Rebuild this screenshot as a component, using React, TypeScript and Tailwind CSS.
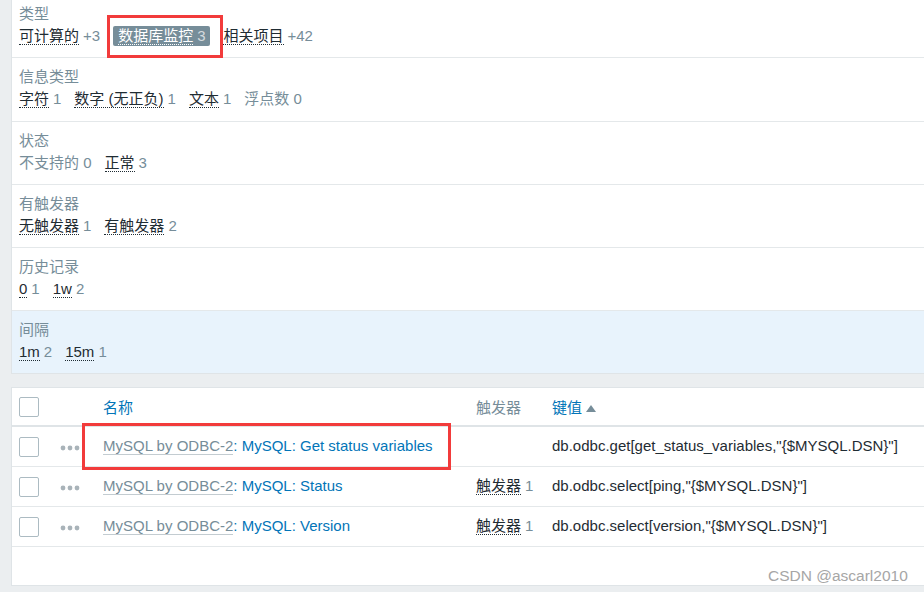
import React from "react";

const FONT = { fontFamily: '"Liberation Sans", Arial, "Noto Sans CJK SC", sans-serif' };

type Item = { name: string; count: string; kind?: "normal" | "selected" | "disabled" };

function Value({ item }: { item: Item }) {
  if (item.kind === "selected") {
    return (
      <span className="inline-flex h-[20px] items-center rounded-[2px] bg-[#768d99] px-[5px] text-white">
        <span className="border-b border-dotted border-white leading-[16px]">{item.name}</span>
        <span className="ml-[4px] text-[#d4dade]">{item.count}</span>
      </span>
    );
  }
  if (item.kind === "disabled") {
    return (
      <span className="text-[#768d99]">
        {item.name} {item.count}
      </span>
    );
  }
  return (
    <span className="whitespace-nowrap">
      <span className="border-b border-dotted border-[#1f2c33] text-[#1f2c33] leading-[16px]">{item.name}</span>
      <span className="ml-[4px] text-[#768d99]">{item.count}</span>
    </span>
  );
}

function Section({
  label,
  items,
  className,
}: {
  label: string;
  items: Item[];
  className: string;
}) {
  return (
    <div className={"flex flex-col px-[7px] " + className}>
      <div className="leading-[18px] text-[#768d99]">{label}</div>
      <div className="mt-[4px] flex h-[18px] items-center gap-x-[13px] leading-[18px]">
        {items.map((it, i) => (
          <Value key={i} item={it} />
        ))}
      </div>
    </div>
  );
}

function Checkbox() {
  return <div className="h-[20px] w-[20px] rounded-[2px] border border-[#acbbc2] bg-white" />;
}

function Dots() {
  return (
    <svg width="20" height="6" viewBox="0 0 20 6">
      <circle cx="3" cy="3" r="2.4" fill="#a9b3b9" />
      <circle cx="10" cy="3" r="2.4" fill="#a9b3b9" />
      <circle cx="17" cy="3" r="2.4" fill="#a9b3b9" />
    </svg>
  );
}

function Row({ name, trigger, keyText }: { name: string; trigger: boolean; keyText: string }) {
  return (
    <div className="flex h-[40px] items-center border-b border-[#e4e8ea] pl-[7px]">
      <div className="w-[41px]">
        <Checkbox />
      </div>
      <div className="flex w-[43px] items-center pt-[2px]">
        <Dots />
      </div>
      <div className="w-[373px] whitespace-nowrap">
        <span className="border-b border-[#c3ccd1] leading-[16px] text-[#768d99]">MySQL by ODBC-2</span>
        <span className="text-[#0275b8]">: {name}</span>
      </div>
      <div className="w-[76px] whitespace-nowrap">
        {trigger && (
          <>
            <span className="border-b border-dotted border-[#1f2c33] leading-[16px] text-[#1f2c33]">触发器</span>
            <span className="ml-[4px] text-[#768d99]">1</span>
          </>
        )}
      </div>
      <div className="flex-1 whitespace-nowrap text-[#1f2c33]">{keyText}</div>
    </div>
  );
}

export default function App() {
  return (
    <div
      className="relative h-[592px] w-[924px] overflow-hidden bg-[#ebeef0] text-[15px]"
      style={FONT}
    >
      <div className="ml-[11px] flex flex-col border-b border-l border-[#dfe4e7] bg-white">
        <Section
          className="h-[58px] border-b border-[#e4e8ea] pt-[5px]"
          label="类型"
          items={[
            { name: "可计算的", count: "+3" },
            { name: "数据库监控", count: "3", kind: "selected" },
            { name: "相关项目", count: "+42" },
          ]}
        />
        <Section
          className="h-[64px] border-b border-[#e4e8ea] pt-[10px]"
          label="信息类型"
          items={[
            { name: "字符", count: "1" },
            { name: "数字 (无正负)", count: "1" },
            { name: "文本", count: "1" },
            { name: "浮点数", count: "0", kind: "disabled" },
          ]}
        />
        <Section
          className="h-[63px] border-b border-[#e4e8ea] pt-[10px]"
          label="状态"
          items={[
            { name: "不支持的", count: "0", kind: "disabled" },
            { name: "正常", count: "3" },
          ]}
        />
        <Section
          className="h-[63px] border-b border-[#e4e8ea] pt-[10px]"
          label="有触发器"
          items={[
            { name: "无触发器", count: "1" },
            { name: "有触发器", count: "2" },
          ]}
        />
        <Section
          className="h-[63px] border-b border-[#e4e8ea] pt-[10px]"
          label="历史记录"
          items={[
            { name: "0", count: "1" },
            { name: "1w", count: "2" },
          ]}
        />
        <Section
          className="h-[62px] bg-[#e8f3fc] pt-[10px]"
          label="间隔"
          items={[
            { name: "1m", count: "2" },
            { name: "15m", count: "1" },
          ]}
        />
      </div>

      <div className="ml-[11px] mt-[13px] h-[199px] border-y border-l border-[#dfe4e7] bg-white">
        <div className="flex h-[39px] items-center border-b-2 border-[#dfe4e7] pl-[7px]">
          <div className="w-[41px]">
            <Checkbox />
          </div>
          <div className="w-[43px]" />
          <div className="w-[373px] pt-[3px] text-[#0275b8]">名称</div>
          <div className="w-[76px] pt-[3px] text-[#768d99]">触发器</div>
          <div className="flex flex-1 items-center pt-[3px] text-[#0275b8]">
            键值
            <svg className="ml-[4px]" width="10" height="7" viewBox="0 0 10 7">
              <polygon points="5,0 10,7 0,7" fill="#768d99" />
            </svg>
          </div>
        </div>
        <Row name="MySQL: Get status variables" trigger={false} keyText={'db.odbc.get[get_status_variables,"{$MYSQL.DSN}"]'} />
        <Row name="MySQL: Status" trigger={true} keyText={'db.odbc.select[ping,"{$MYSQL.DSN}"]'} />
        <Row name="MySQL: Version" trigger={true} keyText={'db.odbc.select[version,"{$MYSQL.DSN}"]'} />
      </div>

      <div className="absolute left-[768px] top-[566px] text-[15.5px] leading-[20px] text-[#a6a6a6]">
        CSDN @ascarl2010
      </div>

      <div className="absolute left-[107px] top-[15px] h-[43px] w-[116px] border-[3px] border-[#f23b3b]" />
      <div className="absolute left-[82px] top-[423px] h-[47px] w-[369px] border-[3px] border-[#f23b3b]" />
    </div>
  );
}
